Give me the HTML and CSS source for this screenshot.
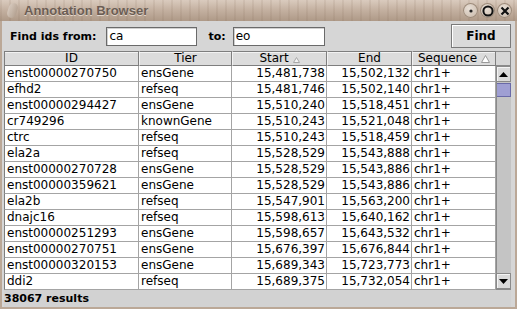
FILE: index.html
```html
<!DOCTYPE html>
<html lang="en">
<head>
  <meta charset="UTF-8" />
  <title>Annotation Browser</title>
  <link rel="stylesheet" href="styles.css">
</head>
<body>
  <div class="window">
    <header class="titlebar">
      <span class="grip"></span>
      <span class="title">Annotation Browser</span>
      <div class="title-buttons">
        <span class="tbtn"><svg width="14" height="14" viewBox="0 0 14 14"><circle cx="7" cy="7" r="1.6" fill="#222"/></svg></span>
        <span class="tbtn"><svg width="14" height="14" viewBox="0 0 14 14"><circle cx="7" cy="7" r="4.6" fill="none" stroke="#111" stroke-width="2"/></svg></span>
        <span class="tbtn"><svg width="14" height="14" viewBox="0 0 14 14"><path d="M3.5 3.5 L10.5 10.5 M10.5 3.5 L3.5 10.5" stroke="#111" stroke-width="2.2"/></svg></span>
      </div>
    </header>

    <main class="body">
      <div class="search">
        <label class="lbl">Find ids from:</label>
        <input class="field from" type="text" value="ca">
        <label class="lbl to">to:</label>
        <input class="field until" type="text" value="eo">
        <button class="find-btn">Find</button>
      </div>

      <div class="grid-wrap">
        <table class="results">
          <colgroup>
            <col style="width:135px"><col style="width:93px"><col style="width:95px"><col style="width:85px"><col style="width:84px">
          </colgroup>
          <thead>
            <tr>
              <th>ID</th>
              <th>Tier</th>
              <th>Start <svg class="sort" width="7" height="6" viewBox="0 0 7 6"><path d="M3.5 0.5 L6.5 5.5 L0.5 5.5 Z" fill="#f4f4f4" stroke="#a8a8a8"/></svg></th>
              <th>End</th>
              <th>Sequence <svg class="sort" width="9" height="8" viewBox="0 0 9 8"><path d="M4.5 0.5 L8.5 7.5 L0.5 7.5 Z" fill="#fff" stroke="#999"/></svg></th>
            </tr>
          </thead>
          <tbody>
            <tr><td>enst00000270750</td><td>ensGene</td><td class="num">15,481,738</td><td class="num">15,502,132</td><td>chr1+</td></tr>
            <tr><td>efhd2</td><td>refseq</td><td class="num">15,481,746</td><td class="num">15,502,140</td><td>chr1+</td></tr>
            <tr><td>enst00000294427</td><td>ensGene</td><td class="num">15,510,240</td><td class="num">15,518,451</td><td>chr1+</td></tr>
            <tr><td>cr749296</td><td>knownGene</td><td class="num">15,510,243</td><td class="num">15,521,048</td><td>chr1+</td></tr>
            <tr><td>ctrc</td><td>refseq</td><td class="num">15,510,243</td><td class="num">15,518,459</td><td>chr1+</td></tr>
            <tr><td>ela2a</td><td>refseq</td><td class="num">15,528,529</td><td class="num">15,543,888</td><td>chr1+</td></tr>
            <tr><td>enst00000270728</td><td>ensGene</td><td class="num">15,528,529</td><td class="num">15,543,886</td><td>chr1+</td></tr>
            <tr><td>enst00000359621</td><td>ensGene</td><td class="num">15,528,529</td><td class="num">15,543,886</td><td>chr1+</td></tr>
            <tr><td>ela2b</td><td>refseq</td><td class="num">15,547,901</td><td class="num">15,563,200</td><td>chr1+</td></tr>
            <tr><td>dnajc16</td><td>refseq</td><td class="num">15,598,613</td><td class="num">15,640,162</td><td>chr1+</td></tr>
            <tr><td>enst00000251293</td><td>ensGene</td><td class="num">15,598,657</td><td class="num">15,643,532</td><td>chr1+</td></tr>
            <tr><td>enst00000270751</td><td>ensGene</td><td class="num">15,676,397</td><td class="num">15,676,844</td><td>chr1+</td></tr>
            <tr><td>enst00000320153</td><td>ensGene</td><td class="num">15,689,343</td><td class="num">15,723,773</td><td>chr1+</td></tr>
            <tr><td>ddi2</td><td>refseq</td><td class="num">15,689,375</td><td class="num">15,732,054</td><td>chr1+</td></tr>
          </tbody>
        </table>

        <div class="vscroll">
          <div class="corner"></div>
          <div class="track">
            <div class="arrow"><svg width="9" height="5" viewBox="0 0 9 5"><path d="M4.5 0 L9 5 L0 5 Z" fill="#000"/></svg></div>
            <div class="thumb"></div>
            <div class="rest"></div>
            <div class="arrow"><svg width="9" height="5" viewBox="0 0 9 5"><path d="M0 0 L9 0 L4.5 5 Z" fill="#000"/></svg></div>
          </div>
        </div>
      </div>

      <div class="status">38067 results</div>
    </main>
  </div>
</body>
</html>
```

FILE: styles.css
```css
body {
  margin: 0;
  font-family: "DejaVu Sans", sans-serif;
  font-size: 12px;
  color: #000;
}

.window {
  width: 517px;
  height: 309px;
  display: flex;
  flex-direction: column;
  background: #bba897;
  overflow: hidden;
}

/* title bar */
.titlebar {
  height: 21px;
  flex: none;
  display: flex;
  align-items: center;
  padding-left: 8px;
  background:
    repeating-linear-gradient(90deg, rgba(120, 95, 75, 0.1) 0 2px, transparent 2px 9px),
    linear-gradient(#dacbbe, #c5b2a2 45%, #ae9987);
}

.grip {
  width: 9px;
  height: 15px;
  border-radius: 5px;
  background: linear-gradient(90deg, #d9cdc2, #b3a191);
  transform: rotate(18deg);
  opacity: 0.8;
}

.title {
  margin-left: 7px;
  font-family: "Liberation Sans", sans-serif;
  font-weight: bold;
  font-size: 13px;
  color: #6b5d54;
  text-shadow: 0 1px 0 #e3d7cc;
}

.title-buttons {
  margin-left: auto;
  margin-right: 5px;
  display: flex;
  gap: 2px;
}

.tbtn {
  width: 15px;
  height: 15px;
  border-radius: 50%;
  display: flex;
  align-items: center;
  justify-content: center;
  background: radial-gradient(circle at 40% 35%, #e9e0d7, #c4b3a3);
  box-shadow: inset 0 0 0 1px #9d8a79;
}

/* window body */
.body {
  flex: 1;
  display: flex;
  flex-direction: column;
  margin: 0 2px 2px 2px;
  padding: 0 4px 0 2px;
  background: #d6d6d6;
}

.search {
  height: 30px;
  flex: none;
  display: flex;
  align-items: center;
  padding-left: 6px;
}

.lbl {
  font-weight: bold;
  font-size: 11px;
}

.lbl.to {
  margin-left: 11px;
}

.field {
  box-sizing: border-box;
  width: 91px;
  height: 19px;
  margin: 0 0 0 4px;
  padding: 0 2px;
  border: 1px solid #6a6a6a;
  box-shadow: inset 1px 1px 0 #d0d0d0;
  font-family: "DejaVu Sans", sans-serif;
  font-size: 12px;
  background: #fff;
}

.field.from {
  margin-left: 10px;
}

.field.until {
  width: 92px;
  margin-left: 7px;
}

.find-btn {
  box-sizing: border-box;
  margin-left: auto;
  width: 60px;
  height: 24px;
  border: 1px solid #7a7a7a;
  box-shadow: inset 1px 1px 0 #fff;
  background: #dadada;
  font-family: "DejaVu Sans", sans-serif;
  font-weight: bold;
  font-size: 12px;
  padding: 0;
}

/* results grid */
.grid-wrap {
  display: flex;
  flex: none;
}

.results {
  width: 492px;
  table-layout: fixed;
  border-collapse: separate;
  border-spacing: 0;
  background: #fff;
}

.results th {
  box-sizing: border-box;
  height: 15px;
  padding: 0;
  font-weight: normal;
  font-size: 12px;
  line-height: 13px;
  text-align: center;
  background: #dcdcdc;
  border: 1px solid #7e7e7e;
  border-left-color: #f2f2f2;
  box-shadow: inset 0 1px 0 #f2f2f2;
  white-space: nowrap;
}

.results th:first-child {
  border-left-color: #7e7e7e;
}

.sort {
  vertical-align: -1px;
}

.results td {
  height: 15px;
  padding: 0 0 0 2px;
  line-height: 15px;
  border-right: 1px solid #a4a4a4;
  border-bottom: 1px solid #a4a4a4;
  white-space: nowrap;
  overflow: hidden;
}

.results td:first-child {
  border-left: 1px solid #7e7e7e;
}

.results td.num {
  text-align: right;
  padding: 0 1px 0 0;
}

/* scrollbar */
.vscroll {
  width: 15px;
  display: flex;
  flex-direction: column;
}

.corner {
  box-sizing: border-box;
  height: 15px;
  background: #d6d6d6;
  border: 1px solid #8a8a8a;
  border-left: none;
}

.track {
  height: 224px;
  display: flex;
  flex-direction: column;
  background: #c4c4c4;
  border-left: 1px solid #8a8a8a;
  border-bottom: 1px solid #8a8a8a;
  box-sizing: border-box;
}

.arrow {
  box-sizing: border-box;
  height: 16px;
  display: flex;
  align-items: center;
  justify-content: center;
  background: #dadada;
  border: 1px solid #8a8a8a;
  border-left: none;
  box-shadow: inset 1px 1px 0 #f4f4f4;
}

.thumb {
  box-sizing: border-box;
  height: 14px;
  margin-top: 1px;
  background-color: #b6b6e0;
  background-image: radial-gradient(#8484c4 0.6px, transparent 0.8px);
  background-size: 2px 2px;
  border: 1px solid #6a6aa8;
  border-left: none;
}

.rest {
  flex: 1;
}

.status {
  flex: 1;
  display: flex;
  align-items: center;
  font-weight: bold;
  font-size: 11px;
  background: #d2d2d2;
}
```
